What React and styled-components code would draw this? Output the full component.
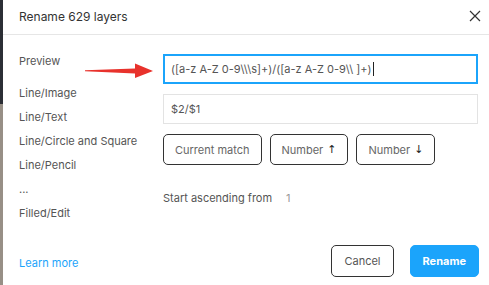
import React from "react";
import styled, { createGlobalStyle } from "styled-components";

const GlobalStyle = createGlobalStyle`
  html, body { margin: 0; padding: 0; background: #fff; overflow: hidden; }
  body { font-family: Inter, "Noto Sans", sans-serif; }
`;

const FIND = "([a-z A-Z 0-9\\\\\\s]+)/([a-z A-Z 0-9\\\\ ]+)";
const LAYERS = ["Line/Image", "Line/Text", "Line/Circle and Square", "Line/Pencil", "...", "Filled/Edit"];

function Arrow() {
  return (
    <Style.ArrowBox>
      <svg width="70" height="16" viewBox="0 0 70 16">
        <polygon points="0,7.2 50,5.5 50,0.5 68,8 50,15 50,10.5 0,8.2" fill="#e8322c" />
      </svg>
    </Style.ArrowBox>
  );
}

function App() {
  return (
    <>
      <GlobalStyle />
      <Style.Page>
        <Style.Edge />
        <Style.Dialog>
          <Style.Header>
            <Style.Title>Rename 629 layers</Style.Title>
            <Style.Close>
              <svg width="12" height="12" viewBox="0 0 12 12">
                <path d="M1 1L11 11M11 1L1 11" stroke="#333" strokeWidth="1.2" />
              </svg>
            </Style.Close>
          </Style.Header>
          <Style.Body>
            <Style.Side>
              <Style.Label first>Preview</Style.Label>
              {LAYERS.map((l) => (
                <Style.Label key={l}>{l}</Style.Label>
              ))}
              <Arrow />
            </Style.Side>
            <Style.Main>
              <Style.Field active>
                {FIND}
                <Style.Caret />
              </Style.Field>
              <Style.Field>$2/$1</Style.Field>
              <Style.Chips>
                <Style.Chip>Current match</Style.Chip>
                <Style.Chip>Number <Style.Sym>↑</Style.Sym></Style.Chip>
                <Style.Chip>Number <Style.Sym>↓</Style.Sym></Style.Chip>
              </Style.Chips>
              <Style.StartRow>
                Start ascending from
                <Style.Num>1</Style.Num>
              </Style.StartRow>
            </Style.Main>
          </Style.Body>
          <Style.Footer>
            <Style.Link>Learn more</Style.Link>
            <Style.Actions>
              <Style.Button>Cancel</Style.Button>
              <Style.Button primary>Rename</Style.Button>
            </Style.Actions>
          </Style.Footer>
        </Style.Dialog>
      </Style.Page>
    </>
  );
}

export default App;

const Style = {
  Page: styled.div`
    display: flex;
    width: 489px;
    height: 285px;
    overflow: hidden;
  `,

  Edge: styled.div`
    width: 3px;
    flex-shrink: 0;
    background: linear-gradient(to bottom, #2b2e35 0, #2b2e35 104px, #978f86 104px, #978f86 100%);
  `,

  Dialog: styled.div`
    flex: 1;
    display: flex;
    flex-direction: column;
    background: #fff;
  `,

  Header: styled.div`
    height: 35px;
    display: flex;
    align-items: center;
    justify-content: space-between;
    padding: 0 8px 2px 16px;
    border-bottom: 1px solid #e6e6e6;
    box-sizing: border-box;
  `,

  Title: styled.div`
    font-size: 12px;
    color: #333;
  `,

  Close: styled.div`
    width: 12px;
    height: 12px;
    margin-top: -1px;
    display: flex;
  `,

  Body: styled.div`
    display: flex;
    flex: 1;
  `,

  Side: styled.div`
    position: relative;
    width: 160px;
    flex-shrink: 0;
    padding: 19px 0 0 16px;
    box-sizing: border-box;
  `,

  Label: styled.div`
    font-size: 11px;
    color: #555;
    line-height: 14px;
    height: 14px;
    margin-top: ${(p) => (p.first ? "0" : "10px")};
    margin-bottom: ${(p) => (p.first ? "8px" : "0")};
    &:nth-child(2) { margin-top: 18px; }
  `,

  ArrowBox: styled.div`
    position: absolute;
    left: 82px;
    top: 28px;
    line-height: 0;
  `,

  Main: styled.div`
    flex: 1;
    display: flex;
    flex-direction: column;
    padding: 19px 11px 0 0;
  `,

  Field: styled.div`
    height: 30px;
    box-sizing: border-box;
    display: flex;
    align-items: center;
    padding: 0 ${(p) => (p.active ? "6px" : "7px")};
    border: ${(p) => (p.active ? "2px solid #1ba4fb" : "1px solid #e3e3e3")};
    font-size: 11px;
    color: #555;
    white-space: pre;
    margin-bottom: 10px;
  `,

  Caret: styled.span`
    display: inline-block;
    width: 1px;
    height: 14px;
    background: #222;
    margin-left: 1px;
  `,

  Chips: styled.div`
    display: flex;
    gap: 8px;
  `,

  Chip: styled.div`
    height: 31px;
    box-sizing: border-box;
    display: flex;
    align-items: center;
    padding: 0 11px;
    border: 1px solid #333;
    border-radius: 5px;
    font-size: 11px;
    color: #666;
    gap: 4px;
  `,

  Sym: styled.span`
    color: #222;
    font-size: 11px;
    font-family: "DejaVu Sans", sans-serif;
  `,

  StartRow: styled.div`
    margin-top: 26px;
    font-size: 11px;
    color: #555;
    display: flex;
    gap: 14px;
  `,

  Num: styled.span`
    color: #999;
  `,

  Footer: styled.div`
    height: 48px;
    display: flex;
    align-items: flex-start;
    justify-content: space-between;
    padding: 8px 10px 0 16px;
    box-sizing: border-box;
  `,

  Link: styled.div`
    font-size: 11px;
    color: #1ba4fb;
    margin-top: 11px;
  `,

  Actions: styled.div`
    display: flex;
    gap: 16px;
  `,

  Button: styled.div`
    height: 32px;
    box-sizing: border-box;
    display: flex;
    align-items: center;
    justify-content: center;
    border-radius: 5px;
    font-size: 11px;
    padding: 0 12px;
    border: 1px solid ${(p) => (p.primary ? "#1ba4fb" : "#333")};
    background: ${(p) => (p.primary ? "#1ba4fb" : "#fff")};
    color: ${(p) => (p.primary ? "#fff" : "#555")};
    font-weight: ${(p) => (p.primary ? 700 : 400)};
    min-width: ${(p) => (p.primary ? "67px" : "60px")};
  `,
};
